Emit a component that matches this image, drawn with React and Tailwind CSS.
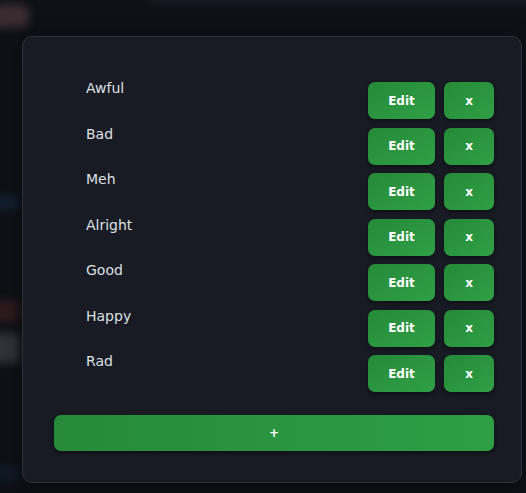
export default function App() {
  const moods = ["Awful", "Bad", "Meh", "Alright", "Good", "Happy", "Rad"];
  const btn =
    "flex items-center justify-center h-[37px] rounded-[7px] bg-gradient-to-br from-[#268a39] to-[#2f9f45] text-white font-bold text-[12px] shadow-[0_2px_4px_rgba(0,0,0,0.45)]";
  return (
    <div
      className="relative min-h-[493px] w-[526px] overflow-hidden bg-[#0e1116]"
      style={{ fontFamily: '"DejaVu Sans", sans-serif' }}
    >
      <div className="absolute left-[-10px] top-[4px] h-[24px] w-[40px] rounded-full bg-[#3a2d32] blur-[4px]" />
      <div className="absolute left-[150px] top-[-4px] h-[8px] w-[380px] bg-[#171c24] blur-[3px]" />
      <div className="absolute left-[-10px] top-[195px] h-[14px] w-[30px] bg-[#132030] blur-[4px]" />
      <div className="absolute left-[-10px] top-[300px] h-[22px] w-[30px] bg-[#2e1b1f] blur-[4px]" />
      <div className="absolute left-[-10px] top-[333px] h-[30px] w-[30px] bg-[#30343a] blur-[4px]" />
      <div className="absolute left-[-10px] top-[465px] h-[16px] w-[30px] bg-[#111b27] blur-[4px]" />
      <div className="relative pl-[22px] pt-[36px]">
        <div className="w-[500px] h-[447px] rounded-[10px] border border-[#2e333b] bg-[#181b23] pt-[40px] pl-[31px] pr-[27px] shadow-[0_4px_20px_rgba(0,0,0,0.5)]">
          <div className="flex flex-col pl-[32px]">
            {moods.map((m) => (
              <div key={m} className="flex h-[45.5px] items-start justify-between">
                <span className="pt-[1px] text-[14px] leading-5 text-[#dde0e5]">{m}</span>
                <div className="mt-[5px] flex gap-[9px]">
                  <button className={`${btn} w-[67px]`}>Edit</button>
                  <button className={`${btn} w-[50px]`}>x</button>
                </div>
              </div>
            ))}
          </div>
          <button className="mt-[19.5px] flex h-[36px] w-full items-center justify-center rounded-[7px] bg-gradient-to-r from-[#268a39] to-[#2e9f45] text-[12px] font-bold text-white shadow-[0_2px_4px_rgba(0,0,0,0.45)]">
            +
          </button>
        </div>
      </div>
    </div>
  );
}
